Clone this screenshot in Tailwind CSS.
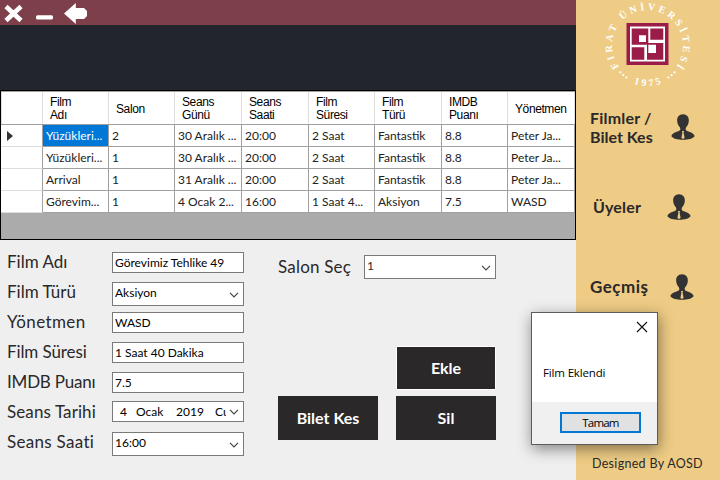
<!DOCTYPE html>
<html lang="tr">
<head>
<meta charset="utf-8">
<title>Filmler</title>
<script src="https://cdn.jsdelivr.net/npm/@tailwindcss/browser@4"></script>
</head>
<body class="relative w-[720px] h-[480px] overflow-hidden flex bg-[#efefef] font-['Century_Gothic',Lato,sans-serif] text-[#2a2829] whitespace-nowrap">
<svg class="hidden">
  <symbol id="person" viewBox="0 0 24 26"><path fill="#333" d="M12 .3c4 0 6.200 2.900 5.800 7-.2 2.700-1.400 4.500-2.600 6-.9 1.300-.6 2.800.4 3.500 3.400 1.200 7.400 2.400 8 5.400-1.600 2.400-6.400 3.500-11.600 3.500S2 24.600.4 22.200c.6-3 4.600-4.200 8-5.400 1-.7 1.300-2.200.4-3.500-1.200-1.500-2.400-3.300-2.600-6C5.800 3.200 8 .3 12 .3z"/><path fill="#eecc85" d="M11 17h2l-.4 1.700 1 5.200-1.600 1-1.600-1 1-5.200z"/></symbol>
  <symbol id="chev" viewBox="0 0 10 6"><path d="M1 .8l4 4 4-4" fill="none" stroke="#444" stroke-width="1.200"/></symbol>
</svg>
<main class="w-[576px] flex flex-col">
  <header class="h-[25px] bg-[#7d404a] flex">
    <svg width="100" height="25" viewBox="0 0 100 25"><path d="M6 6.500l15 14M21 6.500l-15 14" stroke="#fff" stroke-width="4.600"/><rect x="36" y="15.200" width="17" height="4.300" rx="1.500" fill="#fff"/><path d="M64 13.500L75.800 3v5H84l3 3v5l-3 3h-8.200v5z" fill="#fff"/></svg>
  </header>
  <div class="h-[65px] bg-[#22252e]"></div>
  <section class="h-[150px] border border-black bg-[#ababab] text-[12px]">
    <div class="grid grid-cols-[42px_66px_66px_67px_67px_66px_67px_66px_67px] h-[34px] border-y border-[#a0a0a0] bg-white font-['Liberation_Sans',sans-serif] text-black leading-[13px] tracking-[-0.4px] *:border-r *:border-[#dedede] *:flex *:items-center *:pl-[7px] *:pt-[2px]">
      <div class="border-l"></div><div>Film<br>Adı</div><div>Salon</div><div>Seans<br>Günü</div><div>Seans<br>Saati</div><div>Film<br>Süresi</div><div>Film<br>Türü</div><div>IMDB<br>Puanı</div><div>Yönetmen</div>
    </div>
    <div class="grid grid-cols-[42px_66px_66px_67px_67px_66px_67px_66px_67px] auto-rows-[22px] leading-[22px] bg-white text-[#222] *:border-r *:border-b *:border-[#a0a0a0] *:pl-[3px]">
      <div class="flex items-center border-b-[#dedede]!"><svg class="ml-[3px]" width="6" height="10" viewBox="0 0 6 10"><path d="M0 0l6 5-6 5z" fill="#333"/></svg></div><div class="bg-[#0078d7] text-white">Yüzükleri...</div><div>2</div><div>30 Aralık ...</div><div>20:00</div><div>2 Saat</div><div>Fantastik</div><div>8.8</div><div>Peter Ja...</div>
      <div class="border-b-[#dedede]!"></div><div>Yüzükleri...</div><div>1</div><div>30 Aralık ...</div><div>20:00</div><div>2 Saat</div><div>Fantastik</div><div>8.8</div><div>Peter Ja...</div>
      <div class="border-b-[#dedede]!"></div><div>Arrival</div><div>1</div><div>31 Aralık ...</div><div>20:00</div><div>2 Saat</div><div>Fantastik</div><div>8.8</div><div>Peter Ja...</div>
      <div class="border-b-[#dedede]!"></div><div>Görevim...</div><div>1</div><div>4 Ocak 2...</div><div>16:00</div><div>1 Saat 4...</div><div>Aksiyon</div><div>7.5</div><div>WASD</div>
    </div>
  </section>
  <section class="flex pt-3 pl-[7px]">
    <div class="grid grid-cols-[105px_132px] auto-rows-[30px] items-start text-[12px] text-black">
      <label class="text-[17px] leading-[19px] text-[#2a2829]">Film Adı</label><div class="h-[21px] border border-[#7a7a7a] bg-white pl-[2px] leading-[19px]">Görevimiz Tehlike 49</div>
      <label class="text-[17px] leading-[19px] text-[#2a2829]">Film Türü</label><div class="h-[24px] border border-[#7a7a7a] bg-white pl-[2px] pr-1 leading-[20px] flex justify-between">Aksiyon<svg class="mt-[9px]" width="10" height="6"><use href="#chev"/></svg></div>
      <label class="text-[17px] leading-[19px] text-[#2a2829] tracking-[0.4px]">Yönetmen</label><div class="h-[21px] border border-[#7a7a7a] bg-white pl-[2px] leading-[19px]">WASD</div>
      <label class="text-[17px] leading-[19px] text-[#2a2829] tracking-[-0.1px]">Film Süresi</label><div class="h-[21px] border border-[#7a7a7a] bg-white pl-[2px] leading-[19px]">1 Saat 40 Dakika</div>
      <label class="text-[17px] leading-[19px] text-[#2a2829] tracking-[-0.2px]">IMDB Puanı</label><div class="h-[21px] border border-[#7a7a7a] bg-white pl-[2px] leading-[19px]">7.5</div>
      <label class="text-[17px] leading-[19px] text-[#2a2829] tracking-[0.1px]">Seans Tarihi</label><div class="-mt-px h-[21px] border border-[#7a7a7a] bg-white pl-[7px] pr-1 leading-[19px] flex items-center"><span class="w-[16px]">4</span><span class="w-[40px]">Ocak</span><span class="w-[39px]">2019</span><span class="w-[11px] overflow-hidden">Cu</span><svg class="ml-auto" width="10" height="6"><use href="#chev"/></svg></div>
      <label class="text-[17px] leading-[19px] text-[#2a2829] tracking-[0.3px]">Seans Saati</label><div class="h-[24px] border border-[#7a7a7a] bg-white pl-[2px] pr-1 leading-[20px] flex justify-between">16:00<svg class="mt-[9px]" width="10" height="6"><use href="#chev"/></svg></div>
    </div>
    <div class="ml-[34px] w-[218px] pt-[3px] flex flex-col">
      <div class="flex justify-between">
        <label class="text-[17px] leading-[23px] tracking-[0.2px]">Salon Seç</label>
        <div class="w-[132px] h-[24px] border border-[#7a7a7a] bg-white pl-[2px] pr-1 leading-[20px] text-[12px] flex justify-between">1<svg class="mt-[9px]" width="10" height="6"><use href="#chev"/></svg></div>
      </div>
      <div class="mt-[67px] grid grid-cols-[100px_100px] justify-between gap-y-[6px] text-white font-bold text-[16px]">
        <button class="col-start-2 h-[44px] bg-[#2a2829] border border-white">Ekle</button>
        <button class="h-[44px] bg-[#2a2829]">Bilet Kes</button>
        <button class="h-[44px] bg-[#2a2829]">Sil</button>
      </div>
    </div>
  </section>
</main>
<aside class="w-[144px] bg-[#eecc85] flex flex-col font-bold">
  <svg width="144" height="100" viewBox="0 0 144 100">
    <path id="up" d="M43.100 66.800A35.500 35.500 0 1 1 100 66.800" fill="none"/>
    <path id="low" d="M41.500 72.700A40.500 40.500 0 0 0 101.500 72.700" fill="none"/>
    <g fill="#fff" class="font-['Liberation_Serif',serif] font-bold" font-size="10">
      <text textLength="156" lengthAdjust="spacing"><textPath href="#up">FIRAT ÜNİVERSİTESİ</textPath></text>
      <text text-anchor="middle" letter-spacing="2.600"><textPath href="#low" startOffset="52%">1975</textPath></text>
      <circle cx="44.300" cy="72.300" r="1.100"/><circle cx="47.200" cy="75.200" r="1.100"/><circle cx="50.500" cy="77.500" r="1.100"/>
      <circle cx="98.500" cy="72.300" r="1.100"/><circle cx="95.600" cy="75.200" r="1.100"/><circle cx="92.400" cy="77.500" r="1.100"/>
    </g>
    <rect x="50.500" y="23" width="42" height="42" fill="#9a1c48"/>
    <rect x="54" y="26.500" width="35" height="35" fill="#fff"/>
    <path fill="#9a1c48" d="M55.700 28.500h16.600v16.300H55.700zM74.300 28.500h13V39.700h-13zM55.700 47.300h12.600v12.500H55.700zM71 43h16.300v16.800H71z"/>
    <path fill="#fff" d="M63 35.300h7v6.700h-7zM72.300 44.700H80V53h-7.700z"/>
  </svg>
  <div class="h-[54px] pl-[14px] flex items-center text-[16px] leading-[19px]"><div class="w-[81px]"><span class="tracking-[0.2px]">Filmler /</span><br>Bilet Kes</div><svg width="24" height="26"><use href="#person"/></svg></div>
  <div class="mt-[26px] h-[54px] pl-[17px] flex items-center text-[16px]"><div class="w-[74px] tracking-[0.2px]">Üyeler</div><svg width="24" height="26"><use href="#person"/></svg></div>
  <div class="mt-[26px] h-[54px] pl-[14px] flex items-center text-[17px]"><div class="w-[80px] tracking-[0.5px]">Geçmiş</div><svg width="24" height="26"><use href="#person"/></svg></div>
  <div class="mt-auto pb-[7px] pl-[16px] text-[12.500px] leading-[18px] font-normal tracking-[0.3px]">Designed By AOSD</div>
</aside>
<div class="absolute left-[531px] top-[312px] w-[127px] h-[133px] border border-[#5c5c5c] bg-white shadow-[1px_4px_14px_rgba(0,0,0,0.45)] flex flex-col font-['Open_Sans',sans-serif] text-[11.500px] text-black">
  <div class="h-[89px] relative px-[11px] pt-[51px] leading-[18px] tracking-[-0.15px]">Film Eklendi
    <svg class="absolute right-[9px] top-[8px]" width="12" height="12" viewBox="0 0 12 12"><path d="M1 1l10 10M11 1L1 11" stroke="#111" stroke-width="1.100"/></svg>
  </div>
  <div class="flex-1 bg-[#f0f0f0] pt-[10px] pl-[28px]"><button class="block w-[81px] h-[21px] border-2 border-[#0078d7] bg-[#e1e1e1] leading-[17px] tracking-[-0.8px]">Tamam</button></div>
</div>
</body>
</html>
